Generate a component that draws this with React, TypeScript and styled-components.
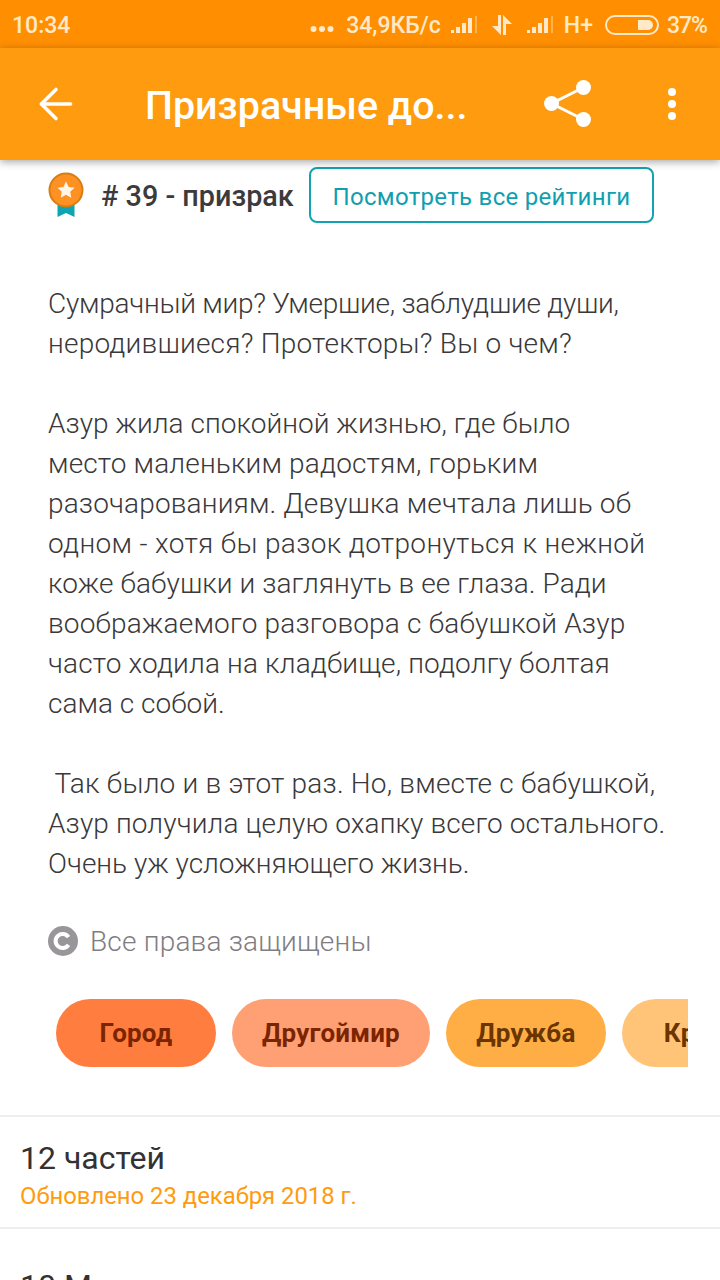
import React, { FC } from 'react'
import styled, { createGlobalStyle } from 'styled-components'
import { ArrowLeft } from 'lucide-react'

const GlobalStyle = createGlobalStyle`
  html, body {
    margin: 0;
    padding: 0;
    background: #fff;
  }
  body {
    font-family: Roboto, 'Noto Sans', sans-serif;
  }
`

const Screen = styled.div`
  width: 720px;
  height: 1280px;
  overflow: hidden;
  background: #fff;
`

const StatusBar = styled.div`
  height: 48px;
  background: #ff8f00;
  display: flex;
  align-items: center;
  padding: 2px 13px 0 12px;
  box-sizing: border-box;
  color: #ffe9c8;
  font-size: 23px;
  font-weight: 500;
`

const StatusRight = styled.div`
  margin-left: auto;
  display: flex;
  align-items: center;
`

const StatusItem = styled.span<{ $gap: number }>`
  display: flex;
  margin-left: ${p => p.$gap}px;
`

const Percent = styled(StatusItem)`
  letter-spacing: -1px;
`

const Toolbar = styled.div`
  position: relative;
  height: 112px;
  background: #ff9b0e;
  display: flex;
  align-items: center;
  box-shadow: 0 2px 8px rgba(0, 0, 0, 0.35);
`

const BackButton = styled.div`
  width: 113px;
  padding-left: 31px;
  box-sizing: border-box;
  display: flex;
  color: #fff;
`

const Title = styled.div`
  width: 350px;
  color: #fff;
  font-size: 39.4px;
  font-weight: 500;
  white-space: nowrap;
  padding: 2px 0 0 32px;
  box-sizing: border-box;
`

const ShareSlot = styled.div`
  margin-left: 81px;
  display: flex;
`

const MenuSlot = styled.div`
  margin-left: 76px;
  display: flex;
`

const RankRow = styled.div`
  display: flex;
  align-items: center;
  padding: 7px 0 0 48px;
  height: 56px;
`

const RankLabel = styled.div`
  font-size: 28.8px;
  font-weight: 500;
  color: #3c3a3c;
  margin-left: 17px;
  padding-top: 2px;
  white-space: nowrap;
  width: 208px;
`

const RatingsButton = styled.div`
  width: 345px;
  height: 56px;
  box-sizing: border-box;
  border: 2px solid #10a3b3;
  border-radius: 8px;
  color: #0f9fb0;
  font-size: 24px;
  letter-spacing: 0.3px;
  padding-top: 3px;
  display: flex;
  align-items: center;
  justify-content: center;
`

const Description = styled.div`
  margin: 61px 0 0 48px;
  font-size: 28px;
  font-weight: 300;
  line-height: 40px;
  color: #3a383a;
`

const TextLine = styled.div<{ $track: number }>`
  height: 40px;
  white-space: pre;
  letter-spacing: ${p => p.$track}px;
`

const Copyright = styled.div`
  display: flex;
  align-items: center;
  margin: 37px 0 0 48px;
  gap: 12px;
  color: #7f7d81;
  font-size: 28px;
  font-weight: 300;
  letter-spacing: 0.2px;
  height: 40px;
`

const TagStrip = styled.div`
  display: flex;
  gap: 16px;
  width: 632px;
  margin: 38px 0 48px 56px;
  overflow: hidden;
`

const Tag = styled.div<{ $bg: string; $fg: string }>`
  flex: none;
  box-sizing: border-box;
  min-width: 160px;
  height: 68px;
  padding: 0 30px;
  border-radius: 34px;
  background: ${p => p.$bg};
  color: ${p => p.$fg};
  font-size: 26px;
  font-weight: 700;
  letter-spacing: 0.2px;
  display: flex;
  align-items: center;
  justify-content: center;
`

const InfoRow = styled.div<{ $top: number }>`
  border-top: 2px solid #eeeeee;
  padding: ${p => p.$top}px 20px 0;
  height: 112px;
  box-sizing: border-box;
`

const InfoTitle = styled.div`
  font-size: 32px;
  line-height: 40px;
  color: #333133;
`

const InfoSub = styled.div`
  font-size: 23.85px;
  line-height: 34px;
  margin-top: 1px;
  color: #ff9b0e;
`

const Bars: FC = () => (
  <svg width="30" height="20" viewBox="0 0 30 20" fill="#ffe9c8">
    <rect x="1" y="15" width="3" height="3" />
    <rect x="6" y="12" width="4" height="6" />
    <rect x="12" y="8" width="4" height="10" />
    <rect x="18" y="3" width="4" height="15" />
    <rect x="25" y="1" width="2" height="17" opacity=".4" />
  </svg>
)

const Medal: FC = () => (
  <svg width="36" height="46" viewBox="0 0 36 46">
    <path d="M9.5 30h17v15l-8.500-4-8.500 4z" fill="#10a3b3" />
    <circle cx="18" cy="18" r="16.500" fill="#ff9122" stroke="#d77d12" strokeWidth="2" />
    <path d="M18 9.500l2.600 5.400 5.900.8-4.300 4.100 1.100 5.900-5.300-2.900-5.300 2.900 1.100-5.900-4.300-4.100 5.900-.8z" fill="#fff6e8" />
  </svg>
)

const lines: [string, number][] = [
  ['Сумрачный мир? Умершие, заблудшие души,', -0.25],
  ['неродившиеся? Протекторы? Вы о чем?', 0.22],
  ['', 0],
  ['Азур жила спокойной жизнью, где было', 0.03],
  ['место маленьким радостям, горьким', 0.15],
  ['разочарованиям. Девушка мечтала лишь об', 0.15],
  ['одном - хотя бы разок дотронуться к нежной', 0.33],
  ['коже бабушки и заглянуть в ее глаза. Ради', 0.07],
  ['воображаемого разговора с бабушкой Азур', 0.18],
  ['часто ходила на кладбище, подолгу болтая', 0.15],
  ['сама с собой.', 0],
  ['', 0],
  [' Так было и в этот раз. Но, вместе с бабушкой,', 0.2],
  ['Азур получила целую охапку всего остального.', 0.11],
  ['Очень уж усложняющего жизнь.', 0],
]

const App: FC = () => (
  <Screen>
    <GlobalStyle />
    <StatusBar>
      <span>10:34</span>
      <StatusRight>
        <svg width="24" height="8" viewBox="0 0 24 8" fill="#ffe9c8" style={{ marginRight: 12, marginTop: 8 }}>
          <circle cx="3.500" cy="4" r="3" />
          <circle cx="12" cy="4" r="3" />
          <circle cx="20.500" cy="4" r="3" />
        </svg>
        <span>34,9КБ/с</span>
        <StatusItem $gap={9}><Bars /></StatusItem>
        <StatusItem $gap={11}>
          <svg width="22" height="24" viewBox="0 0 22 24" fill="#ffe9c8">
            <path d="M7 2h3v20L1 13h6zM12 2l9 9h-6v11h-3z" />
          </svg>
        </StatusItem>
        <StatusItem $gap={13}><Bars /></StatusItem>
        <StatusItem $gap={8}>H+</StatusItem>
        <StatusItem $gap={12}>
          <svg width="54" height="20" viewBox="0 0 54 20" fill="none">
            <rect x="1" y="1" width="52" height="18" rx="9" stroke="#ffe9c8" strokeWidth="2" />
            <path d="M33 5h10a5 5 0 0 1 0 10H33z" fill="#ffe9c8" />
          </svg>
        </StatusItem>
        <Percent $gap={8}>37%</Percent>
      </StatusRight>
    </StatusBar>

    <Toolbar>
      <BackButton>
        <ArrowLeft size={50} strokeWidth={1.7} />
      </BackButton>
      <Title>Призрачные до...</Title>
      <ShareSlot>
        <svg width="48" height="48" viewBox="0 0 48 48" fill="#fff">
          <path d="M39.500 7.500 7.500 23.500l32 16" fill="none" stroke="#fff" strokeWidth="3" />
          <circle cx="39.500" cy="7.500" r="7.500" />
          <circle cx="7.500" cy="23.500" r="7.500" />
          <circle cx="39.500" cy="39.500" r="7.500" />
        </svg>
      </ShareSlot>
      <MenuSlot>
        <svg width="8" height="32" viewBox="0 0 8 32" fill="#fff">
          <circle cx="4" cy="4" r="4" />
          <circle cx="4" cy="16" r="4" />
          <circle cx="4" cy="28" r="4" />
        </svg>
      </MenuSlot>
    </Toolbar>

    <RankRow>
      <Medal />
      <RankLabel># 39 - призрак</RankLabel>
      <RatingsButton>Посмотреть все рейтинги</RatingsButton>
    </RankRow>

    <Description>
      {lines.map(([text, track], i) => (
        <TextLine key={i} $track={track}>{text}</TextLine>
      ))}
    </Description>

    <Copyright>
      <svg width="30" height="30" viewBox="0 0 30 30" fill="none">
        <circle cx="15" cy="15" r="15" fill="#98969a" />
        <path d="M20.500 11.200a7 7 0 1 0 0 7.600" stroke="#fff" strokeWidth="4" />
      </svg>
      Все права защищены
    </Copyright>

    <TagStrip>
      <Tag $bg="#ff7e3f" $fg="#7a2400">Город</Tag>
      <Tag $bg="#ffa074" $fg="#7a2400">Другоймир</Tag>
      <Tag $bg="#ffae45" $fg="#6b3500">Дружба</Tag>
      <Tag $bg="#ffc478" $fg="#6b3500">Кровь</Tag>
    </TagStrip>

    <InfoRow $top={21}>
      <InfoTitle>12 частей</InfoTitle>
      <InfoSub>Обновлено 23 декабря 2018 г.</InfoSub>
    </InfoRow>
    <InfoRow $top={37}>
      <InfoTitle>10 М</InfoTitle>
    </InfoRow>
  </Screen>
)

export default App
